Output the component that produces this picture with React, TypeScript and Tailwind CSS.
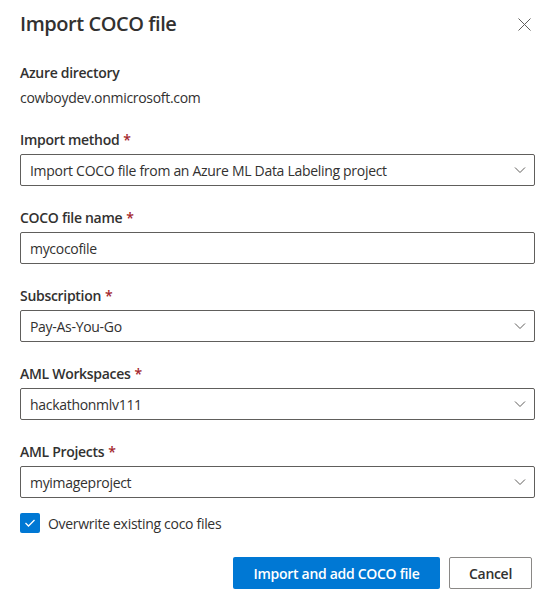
import React from 'react'

function Chevron() {
  return (
    <svg width="12" height="12" viewBox="0 0 12 12" className="shrink-0">
      <path d="M1 3.5 L6 8.5 L11 3.5" fill="none" stroke="#605e5c" strokeWidth="1" />
    </svg>
  )
}

function Label({ text, required }: { text: string; required?: boolean }) {
  return (
    <div className="h-[30px] flex items-center text-[14px] font-semibold text-[#323130]">
      {text}
      {required && <span className="text-[#a4262c] ml-[4px]">*</span>}
    </div>
  )
}

function Dropdown({ label, value }: { label: string; value: string }) {
  return (
    <div className="mt-[16px]">
      <Label text={label} required />
      <div className="h-[32px] border border-[#605e5c] rounded-[2px] flex items-center justify-between pl-[9px] pr-[8px]">
        <span className="text-[14px] text-[#323130]">{value}</span>
        <Chevron />
      </div>
    </div>
  )
}

export default function App() {
  return (
    <div
      className="w-[555px] h-[613px] bg-white px-[20px] pt-[10px] tracking-[-0.3px]"
      style={{ fontFamily: '"Segoe UI", "Open Sans", sans-serif' }}
    >
      <div className="flex items-center justify-between h-[28px]">
        <h1 className="text-[20px] leading-[28px] font-semibold text-[#323130] tracking-[-0.45px]">Import COCO file</h1>
        <svg width="13" height="13" viewBox="0 0 13 13" className="mr-[4px]">
          <path d="M0.5 0.5 L12.5 12.5 M12.5 0.5 L0.5 12.5" stroke="#605e5c" strokeWidth="1" />
        </svg>
      </div>

      <div className="mt-[19px]">
        <Label text="Azure directory" />
        <div className="h-[20px] leading-[20px] text-[14px] text-[#323130] mt-[1px]">cowboydev.onmicrosoft.com</div>
      </div>

      <Dropdown label="Import method" value="Import COCO file from an Azure ML Data Labeling project" />

      <div className="mt-[16px]">
        <Label text="COCO file name" required />
        <div className="h-[32px] border border-[#605e5c] rounded-[2px] flex items-center pl-[9px]">
          <span className="text-[14px] text-[#323130]">mycocofile</span>
        </div>
      </div>

      <Dropdown label="Subscription" value="Pay-As-You-Go" />
      <Dropdown label="AML Workspaces" value="hackathonmlv111" />
      <Dropdown label="AML Projects" value="myimageproject" />

      <div className="mt-[15px] flex items-center h-[20px]">
        <div className="w-[20px] h-[20px] rounded-[2px] bg-[#0078d4] flex items-center justify-center">
          <svg width="12" height="10" viewBox="0 0 12 10">
            <path d="M1.5 5 L4.5 8 L10.5 2" fill="none" stroke="white" strokeWidth="1.3" />
          </svg>
        </div>
        <span className="ml-[8px] text-[14px] text-[#323130]">Overwrite existing coco files</span>
      </div>

      <div className="mt-[24px] flex justify-end gap-[9px] pr-[3px]">
        <button className="h-[32px] w-[207px] rounded-[2px] bg-[#0078d4] text-white text-[14px] font-semibold">
          Import and add COCO file
        </button>
        <button className="h-[32px] w-[83px] rounded-[2px] border border-[#8a8886] bg-white text-[#323130] text-[14px] font-semibold">
          Cancel
        </button>
      </div>
    </div>
  )
}
